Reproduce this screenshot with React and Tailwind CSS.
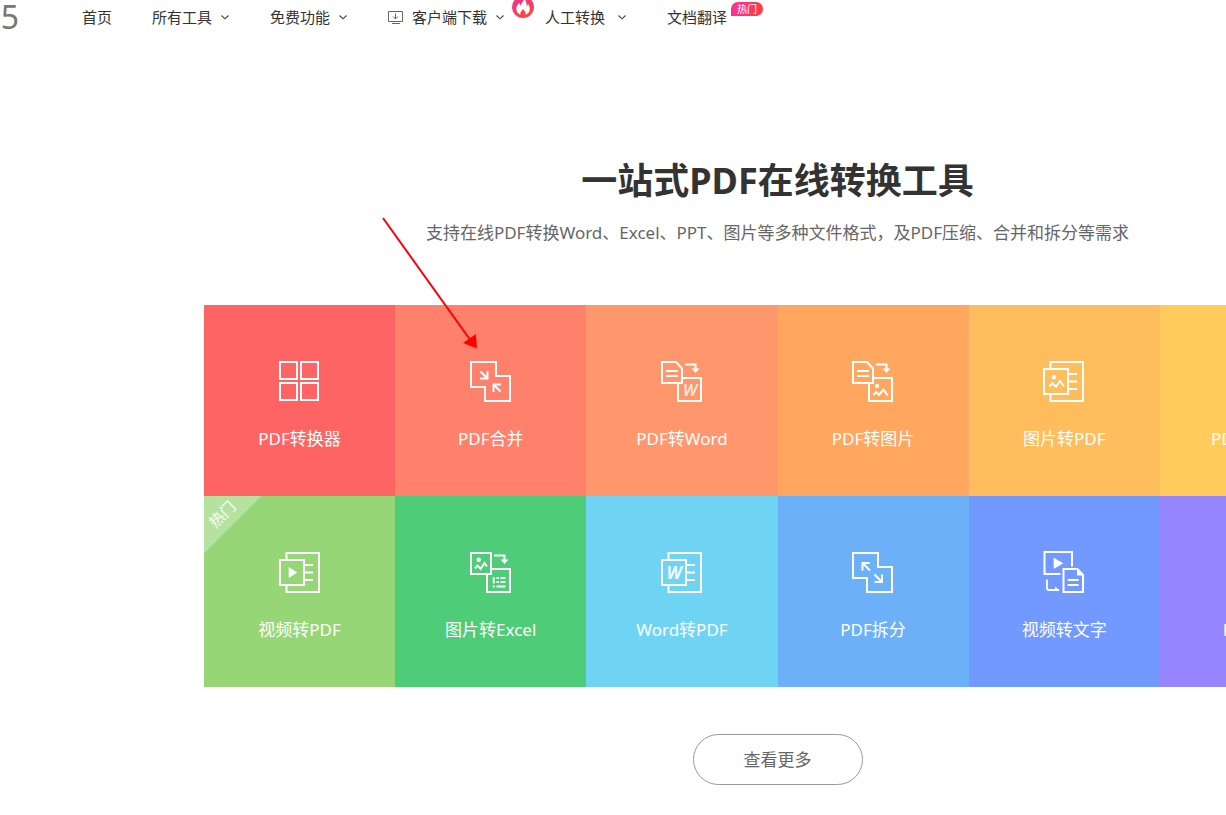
const NAV_ITEMS = [
  { label: '首页' },
  { label: '所有工具', menu: true },
  { label: '免费功能', menu: true },
  { label: '客户端下载', menu: true, download: true },
  { label: '人工转换', menu: true, fire: true },
  { label: '文档翻译', hot: true },
];

const TOOLS = [
  { label: 'PDF转换器', color: 'bg-[#ff6464]', icon: GridIcon },
  { label: 'PDF合并', color: 'bg-[#ff816b]', icon: MergeIcon },
  { label: 'PDF转Word', color: 'bg-[#ff966c]', icon: ToWordIcon },
  { label: 'PDF转图片', color: 'bg-[#ffa65f]', icon: ToImageIcon },
  { label: '图片转PDF', color: 'bg-[#ffbd5d]', icon: FromImageIcon },
  { label: 'PDF转Excel', color: 'bg-[#ffcc5c]', icon: GridIcon },
  { label: '视频转PDF', color: 'bg-[#97d677]', icon: FromVideoIcon, hot: true },
  { label: '图片转Excel', color: 'bg-[#4ecc77]', icon: ImageToExcelIcon },
  { label: 'Word转PDF', color: 'bg-[#6fd4f4]', icon: FromWordIcon },
  { label: 'PDF拆分', color: 'bg-[#6cb0f7]', icon: SplitIcon },
  { label: '视频转文字', color: 'bg-[#7199ff]', icon: VideoToTextIcon },
  { label: 'PDF压缩', color: 'bg-[#9785ff]', icon: MergeIcon },
];

function Icon({ children }) {
  return (
    <svg
      className="w-[42px] h-[42px] overflow-visible"
      viewBox="0 0 42 42"
      fill="none"
      stroke="white"
      strokeWidth="2"
      aria-hidden="true"
    >
      {children}
    </svg>
  );
}

function GridIcon() {
  return (
    <Icon>
      <rect x="1" y="1" width="17" height="17" />
      <rect x="22" y="1" width="17" height="17" />
      <rect x="1" y="22" width="17" height="17" />
      <rect x="22" y="22" width="17" height="17" />
    </Icon>
  );
}

function MergeIcon() {
  return (
    <Icon>
      <path d="M1 1H26V15H40V40H15V26H1Z" />
      <path d="M17.5 10V17.5H10M10.5 10.5L17 17" />
      <path d="M31 23.5H23.5V31M24 24L30.5 30.5" />
    </Icon>
  );
}

function SplitIcon() {
  return (
    <Icon>
      <path d="M1 1H26V15H40V40H15V26H1Z" />
      <path d="M18 11H10.5V18.5M11 11.5L18 18.5" />
      <path d="M30 22.5V30H22.5M22.5 22.5L29.5 29.5" />
    </Icon>
  );
}

// bent arrow plus the bottom-right sheet
function ConvertFrame() {
  return (
    <>
      <path d="M24 3.5H34.5V8" />
      <path d="M30.5 7.5H38.5L34.5 12Z" fill="white" stroke="none" />
      <path d="M21 17H40V40H17V23" />
    </>
  );
}

function SourceDoc() {
  return (
    <>
      <path d="M1 1H15L21 7.5V22H1Z" />
      <path d="M5 10H17M5 15H17" />
    </>
  );
}

function ToWordIcon() {
  return (
    <Icon>
      <SourceDoc />
      <ConvertFrame />
      <text x="29" y="34.5" textAnchor="middle" fill="white" stroke="none" fontSize="16" fontStyle="italic" fontWeight="600" fontFamily="Open Sans, sans-serif" opacity="0.85">
        W
      </text>
    </Icon>
  );
}

function ToImageIcon() {
  return (
    <Icon>
      <SourceDoc />
      <ConvertFrame />
      <circle cx="25" cy="25" r="2.2" fill="white" stroke="none" />
      <path d="M21.5 34L24 31L27 34L31.5 28.5L35.5 34.5" />
    </Icon>
  );
}

// sheet sticking out behind a square, shared by the "to PDF" tools
function PdfFrame() {
  return (
    <>
      <path d="M7.5 8V1H40V40H7.5V33" />
      <rect x="1" y="8" width="24" height="25" />
      <path d="M26 13H34M26 20.5H34M26 28H34" />
    </>
  );
}

function FromImageIcon() {
  return (
    <Icon>
      <PdfFrame />
      <circle cx="11" cy="16.3" r="2.2" fill="white" stroke="none" />
      <path d="M6.5 25.5L9.2 22.3L13 25.7L17 20L21 25.5" />
    </Icon>
  );
}

function FromVideoIcon() {
  return (
    <Icon>
      <PdfFrame />
      <path d="M9.7 15L18.3 20.5L9.7 26Z" fill="white" stroke="none" />
    </Icon>
  );
}

function FromWordIcon() {
  return (
    <Icon>
      <PdfFrame />
      <text x="13" y="26.5" textAnchor="middle" fill="white" stroke="none" fontSize="17" fontStyle="italic" fontWeight="700" fontFamily="Open Sans, sans-serif" opacity="0.9">
        W
      </text>
    </Icon>
  );
}

function ImageToExcelIcon() {
  return (
    <Icon>
      <rect x="1" y="1" width="20" height="21" />
      <circle cx="8.7" cy="7.7" r="2.2" fill="white" stroke="none" />
      <path d="M5 16.5L7.5 13.5L10.7 16.8L14.5 11L17 14.5" />
      <ConvertFrame />
      <path d="M23.7 25V31.5M23.7 33.5V35.5" />
      <path d="M26.5 26H29M30.5 26H35.5M26.5 30.2H29M30.5 30.2H35.5M26.5 34.5H35.5" strokeWidth="1.8" />
    </Icon>
  );
}

function VideoToTextIcon() {
  return (
    <Icon>
      <path d="M17.500 22H1.500V0H29V14.500" />
      <path d="M10.700 5.700L20.300 11.300L10.700 17Z" fill="white" stroke="none" />
      <path d="M20.500 17H34.500L40 23V40H20.500Z" />
      <path d="M34 17V23.500H40Z" fill="white" stroke="none" />
      <path d="M24.700 28H35.700M24.700 33H35.700" />
      <path d="M4 27.500V36Q4 38 6 38H16" strokeWidth="1.800" />
      <path d="M12 34.500L16.500 38.500H12Z" fill="white" stroke="none" />
    </Icon>
  );
}

function Chevron() {
  return (
    <svg className="w-[10px] h-[10px]" viewBox="0 0 10 10" fill="none" stroke="#444" strokeWidth="1.1" aria-hidden="true">
      <path d="M1.5 3.5L5 6.8L8.5 3.5" />
    </svg>
  );
}

function DownloadIcon() {
  return (
    <svg className="w-4 h-4" viewBox="0 0 16 16" fill="none" stroke="#666" strokeWidth="1" aria-hidden="true">
      <path d="M0.5 2.500H14.500V12.500H0.500ZM4 14.500H12" />
      <path d="M7.500 4.500V10M5 7.500L7.500 10L10 7.500" />
    </svg>
  );
}

function FireBadge() {
  return (
    <svg className="absolute -left-[33px] -top-[9px] w-[22px] h-[22px]" viewBox="0 0 22 22" aria-hidden="true">
      <defs>
        <linearGradient id="fire" x1="0" y1="0" x2="0.4" y2="1">
          <stop offset="0" stopColor="#e8329b" />
          <stop offset="1" stopColor="#ff4343" />
        </linearGradient>
      </defs>
      <circle cx="11" cy="11" r="11" fill="url(#fire)" />
      <path
        d="M12 2.5C12.300 5 9.500 6.500 8.700 9.500C8 9 7.600 8 7.500 7C5.500 8.500 4.300 10.500 4.300 12.800C4.300 15.800 6 17.800 8.500 18.700C7.800 16.500 9.700 15 11 13C12.200 14.700 14.200 16.300 13.300 18.700C16 18 17.800 15.800 17.800 13C17.800 11 17 9.300 16 8C15.800 9 15.300 9.700 14.700 10.200C14.800 7.300 14 4.500 12 2.500Z"
        fill="white"
      />
    </svg>
  );
}

function NavItem({ item }) {
  return (
    <a href="#" className={`relative flex shrink-0 items-center ${item.fire ? 'gap-3' : 'gap-2'}`}>
      {item.fire && <FireBadge />}
      {item.download && <DownloadIcon />}
      <span>{item.label}</span>
      {item.menu && <Chevron />}
      {item.hot && (
        <span className="absolute left-full -top-[3px] ml-1 flex h-[14px] w-8 items-center justify-center rounded-full rounded-bl-none bg-linear-to-r from-[#fb2f95] to-[#ff3a3a] text-[10px] leading-none text-white">
          热门
        </span>
      )}
    </a>
  );
}

function ToolCard({ tool }) {
  const ToolIcon = tool.icon;
  return (
    <a href="#" className={`relative flex aspect-square flex-col items-center pt-14 ${tool.color}`}>
      {tool.hot && (
        <span className="absolute left-0 top-0 h-[58px] w-[58px] bg-linear-to-br from-white/30 from-50% to-transparent to-50%">
          <span className="absolute left-0 top-2 w-9 -rotate-45 text-center text-[15px] leading-5 font-medium text-white/80">热门</span>
        </span>
      )}
      <ToolIcon />
      <span className="mt-6 text-[17px] leading-6 text-white">{tool.label}</span>
    </a>
  );
}

export default function App() {
  return (
    <div className="relative min-h-screen overflow-hidden bg-white font-['Noto_Sans','Noto_Sans_CJK_SC',sans-serif] text-[#333]">
      <header className="flex h-[34px] items-center">
        <a href="#" className="flex w-[19px] shrink-0 justify-end overflow-hidden text-[32px] leading-9 text-[#777]">
          365
        </a>
        <nav className="ml-[63px] flex items-center gap-10 text-[15px] leading-6">
          {NAV_ITEMS.map((item) => (
            <NavItem key={item.label} item={item} />
          ))}
        </nav>
      </header>

      <main className="ml-[204px] flex min-w-[1147px] flex-col items-center pt-[123px]">
        <h1 className="text-4xl leading-12 font-bold">一站式PDF在线转换工具</h1>
        <p className="mt-4 text-[17px] leading-6 text-[#666]">
          支持在线PDF转换Word、Excel、PPT、图片等多种文件格式，及PDF压缩、合并和拆分等需求
        </p>

        <div className="mt-[60px] grid w-full grid-cols-6">
          {TOOLS.map((tool) => (
            <ToolCard key={tool.label} tool={tool} />
          ))}
        </div>

        <button className="mt-[47px] h-[51px] w-[170px] rounded-full border border-[#999] text-[17px] text-[#666]">
          查看更多
        </button>
      </main>

      {/* pointer to the merge tool */}
      <svg className="absolute left-[380px] top-[215px] h-[136px] w-[100px]" viewBox="0 0 100 136" aria-hidden="true">
        <path d="M3 3L91 126" stroke="#f00" strokeWidth="2" />
        <path d="M97 133.500L83 128L96 119Z" fill="#f00" />
      </svg>
    </div>
  );
}
